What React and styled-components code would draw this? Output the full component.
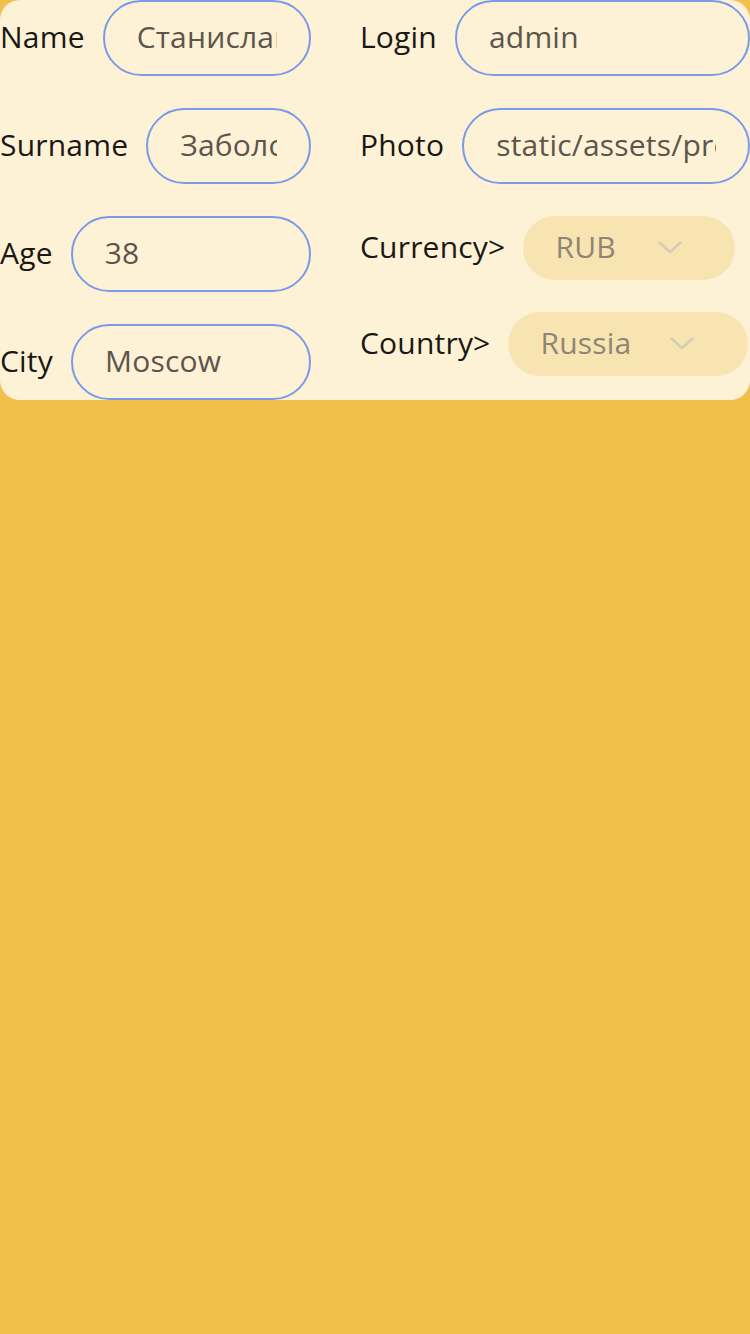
import React from "react";
import styled, { createGlobalStyle } from "styled-components";

const Global = createGlobalStyle`
  html, body { margin: 0; padding: 0; }
  body {
    background: #f0c04a;
    font-family: "Open Sans", "Noto Sans", sans-serif;
    min-height: 100vh;
  }
`;

const Card = styled.div`
  display: flex;
  gap: 49px;
  background: #fdf2d6;
  border-radius: 20px;
  width: 750px;
  box-sizing: border-box;
`;

const Column = styled.div`
  display: flex;
  flex-direction: column;
  gap: 32px;
  width: ${(p) => p.$width || "auto"};
  flex: ${(p) => (p.$grow ? 1 : "none")};
  min-width: 0;
`;

const Row = styled.label`
  display: flex;
  align-items: center;
  gap: 18px;
  height: ${(p) => p.$h || 76}px;
`;

const Label = styled.span`
  font-size: 30px;
  color: #1b1714;
  white-space: nowrap;
  letter-spacing: 0.2px;
  padding-bottom: 4px;
`;

const Input = styled.input`
  flex: 1;
  min-width: 0;
  height: 76px;
  box-sizing: border-box;
  border: 2px solid #7b9be6;
  border-radius: 38px;
  background: transparent;
  padding: 0 32px 4px;
  font-family: inherit;
  font-size: 30px;
  color: #5d554b;
  letter-spacing: 0.2px;
  outline: none;
`;

const SelectBox = styled.div`
  display: flex;
  align-items: center;
  height: 64px;
  width: ${(p) => p.$width}px;
  box-sizing: border-box;
  padding-left: 32px;
  border-radius: 32px;
  background: #f8e4b1;
`;

const SelectValue = styled.span`
  font-size: 30px;
  color: #8e8576;
  letter-spacing: 0.2px;
  width: ${(p) => p.$w}px;
  padding-bottom: 4px;
`;

const Chevron = () => (
  <svg width="24" height="14" viewBox="0 0 24 14" fill="none">
    <path d="M2 2 L12 11 L22 2" stroke="#d6cdb7" strokeWidth="3" strokeLinecap="round" strokeLinejoin="round" />
  </svg>
);

export default function App() {
  return (
    <>
      <Global />
      <Card>
        <Column $width="311px">
          <Row>
            <Label>Name</Label>
            <Input defaultValue="Станислав" />
          </Row>
          <Row>
            <Label>Surname</Label>
            <Input defaultValue="Заболотный" />
          </Row>
          <Row>
            <Label>Age</Label>
            <Input defaultValue="38" />
          </Row>
          <Row>
            <Label>City</Label>
            <Input defaultValue="Moscow" />
          </Row>
        </Column>
        <Column $grow>
          <Row>
            <Label>Login</Label>
            <Input defaultValue="admin" />
          </Row>
          <Row>
            <Label>Photo</Label>
            <Input defaultValue="static/assets/profile.jpg" />
          </Row>
          <Row $h={64}>
            <Label>Currency&gt;</Label>
            <SelectBox $width={212}>
              <SelectValue $w={103}>RUB</SelectValue>
              <Chevron />
            </SelectBox>
          </Row>
          <Row $h={64}>
            <Label>Country&gt;</Label>
            <SelectBox $width={240}>
              <SelectValue $w={130}>Russia</SelectValue>
              <Chevron />
            </SelectBox>
          </Row>
        </Column>
      </Card>
    </>
  );
}
